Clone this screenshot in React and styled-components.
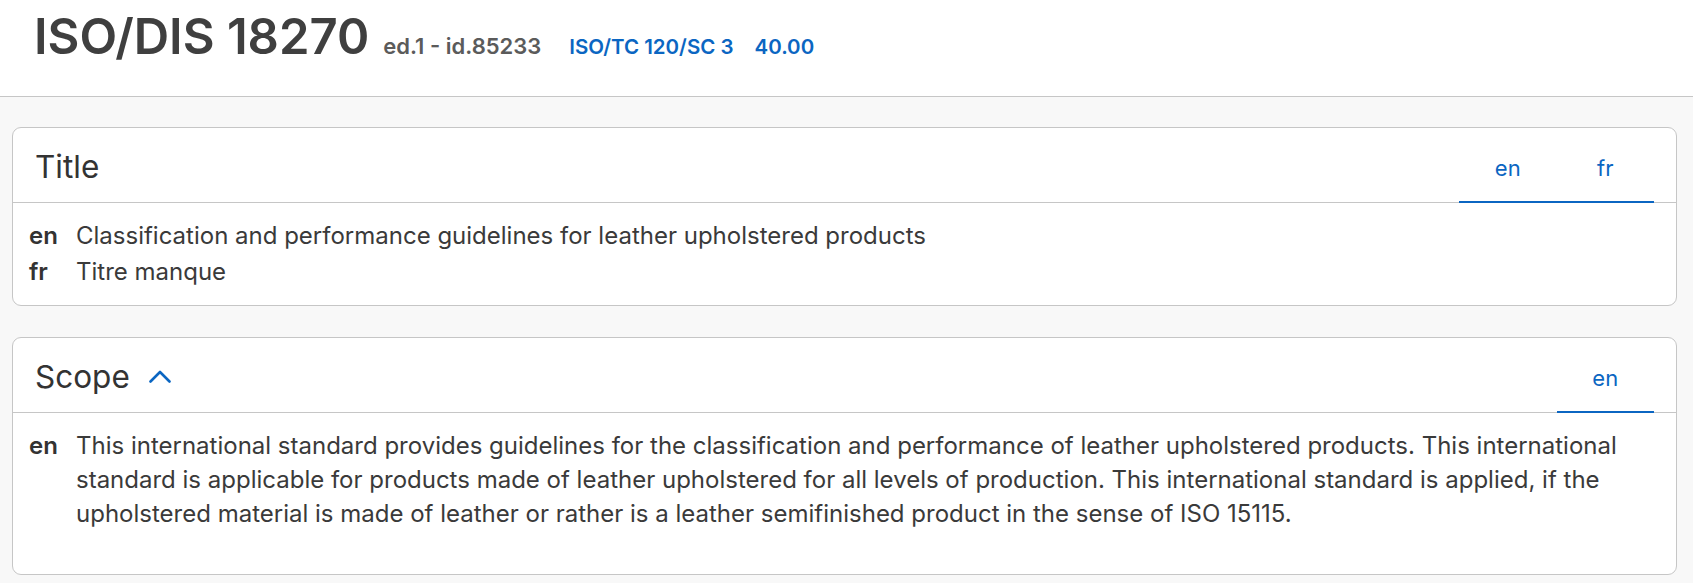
import React from "react";
import styled, { createGlobalStyle } from "styled-components";

const Global = createGlobalStyle`
  html, body { margin: 0; padding: 0; background: #f8f8f8; }
  body { font-family: Inter, "Noto Sans", sans-serif; color: #333; }
  * { box-sizing: border-box; }
`;

const blue = "#0b66c2";
const line = "#c6c6c6";

const Header = styled.header`
  height: 97px;
  background: #fff;
  border-bottom: 1px solid ${line};
  display: flex;
  align-items: flex-start;
  padding: 7px 0 0 34px;
`;

const Heading = styled.h1`
  margin: 0;
  display: flex;
  align-items: baseline;
  font-size: 49px;
  line-height: normal;
  font-weight: 600;
  color: #3f3f3f;
`;

const Meta = styled.span`
  font-size: ${(p) => (p.$link ? 20.5 : 22)}px;
  font-weight: 600;
  color: ${(p) => (p.$link ? blue : "#5b5b5b")};
  margin-left: ${(p) => p.$gap}px;
`;

const Main = styled.main`
  padding: 30px 16px 0 12px;
  display: flex;
  flex-direction: column;
  gap: 31px;
`;

const Card = styled.section`
  background: #fff;
  border: 1px solid ${line};
  border-radius: 9px;
`;

const CardHead = styled.div`
  height: 75px;
  border-bottom: 1px solid ${line};
  display: flex;
  align-items: stretch;
  justify-content: space-between;
  padding: 0 22px 0 22px;
`;

const CardTitle = styled.h2`
  margin: 0;
  display: flex;
  align-items: center;
  gap: 19px;
  font-size: 31.5px;
  font-weight: 400;
  color: #333;
  padding-top: 2px;
`;

const Tabs = styled.div`
  display: flex;
  align-items: stretch;
`;

const Tab = styled.button`
  width: 97.5px;
  border: none;
  background: none;
  font-family: inherit;
  font-size: 22px;
  color: ${blue};
  border-bottom: 2px solid ${blue};
  margin-bottom: -1px;
  padding: 6px 0 0;
  cursor: pointer;
`;

const CardBody = styled.div`
  padding: 16px 16px ${(p) => p.$bottom || 16}px 16px;
  display: flex;
  flex-direction: column;
  gap: 2px;
`;

const Row = styled.div`
  display: grid;
  grid-template-columns: 47px 1fr;
  font-size: 24px;
  line-height: 34px;
`;

const Lang = styled.span`
  font-weight: 600;
  color: #333;
`;

const Text = styled.span`
  color: #3a3a3a;
  padding-right: 20px;
`;

const Chevron = () => (
  <svg width="22" height="13" viewBox="0 0 22 13" fill="none">
    <path d="M1.5 11.5 L11 2 L20.5 11.5" stroke={blue} strokeWidth="2.6" strokeLinecap="round" strokeLinejoin="round" />
  </svg>
);

export default function App() {
  return (
    <>
      <Global />
      <Header>
        <Heading>
          ISO/DIS 18270
          <Meta $gap={14}>ed.1 - id.85233</Meta>
          <Meta $gap={28} $link>ISO/TC 120/SC 3</Meta>
          <Meta $gap={21} $link>40.00</Meta>
        </Heading>
      </Header>
      <Main>
        <Card>
          <CardHead>
            <CardTitle>Title</CardTitle>
            <Tabs>
              <Tab>en</Tab>
              <Tab>fr</Tab>
            </Tabs>
          </CardHead>
          <CardBody>
            <Row>
              <Lang>en</Lang>
              <Text>Classification and performance guidelines for leather upholstered products</Text>
            </Row>
            <Row>
              <Lang>fr</Lang>
              <Text>Titre manque</Text>
            </Row>
          </CardBody>
        </Card>
        <Card>
          <CardHead>
            <CardTitle>
              Scope
              <Chevron />
            </CardTitle>
            <Tabs>
              <Tab>en</Tab>
            </Tabs>
          </CardHead>
          <CardBody $bottom={43}>
            <Row>
              <Lang>en</Lang>
              <Text>
                This international standard provides guidelines for the classification and performance of leather upholstered products. This international standard is applicable for products made of leather upholstered for all levels of production. This international standard is applied, if the upholstered material is made of leather or rather is a leather semifinished product in the sense of ISO 15115.
              </Text>
            </Row>
          </CardBody>
        </Card>
      </Main>
    </>
  );
}
